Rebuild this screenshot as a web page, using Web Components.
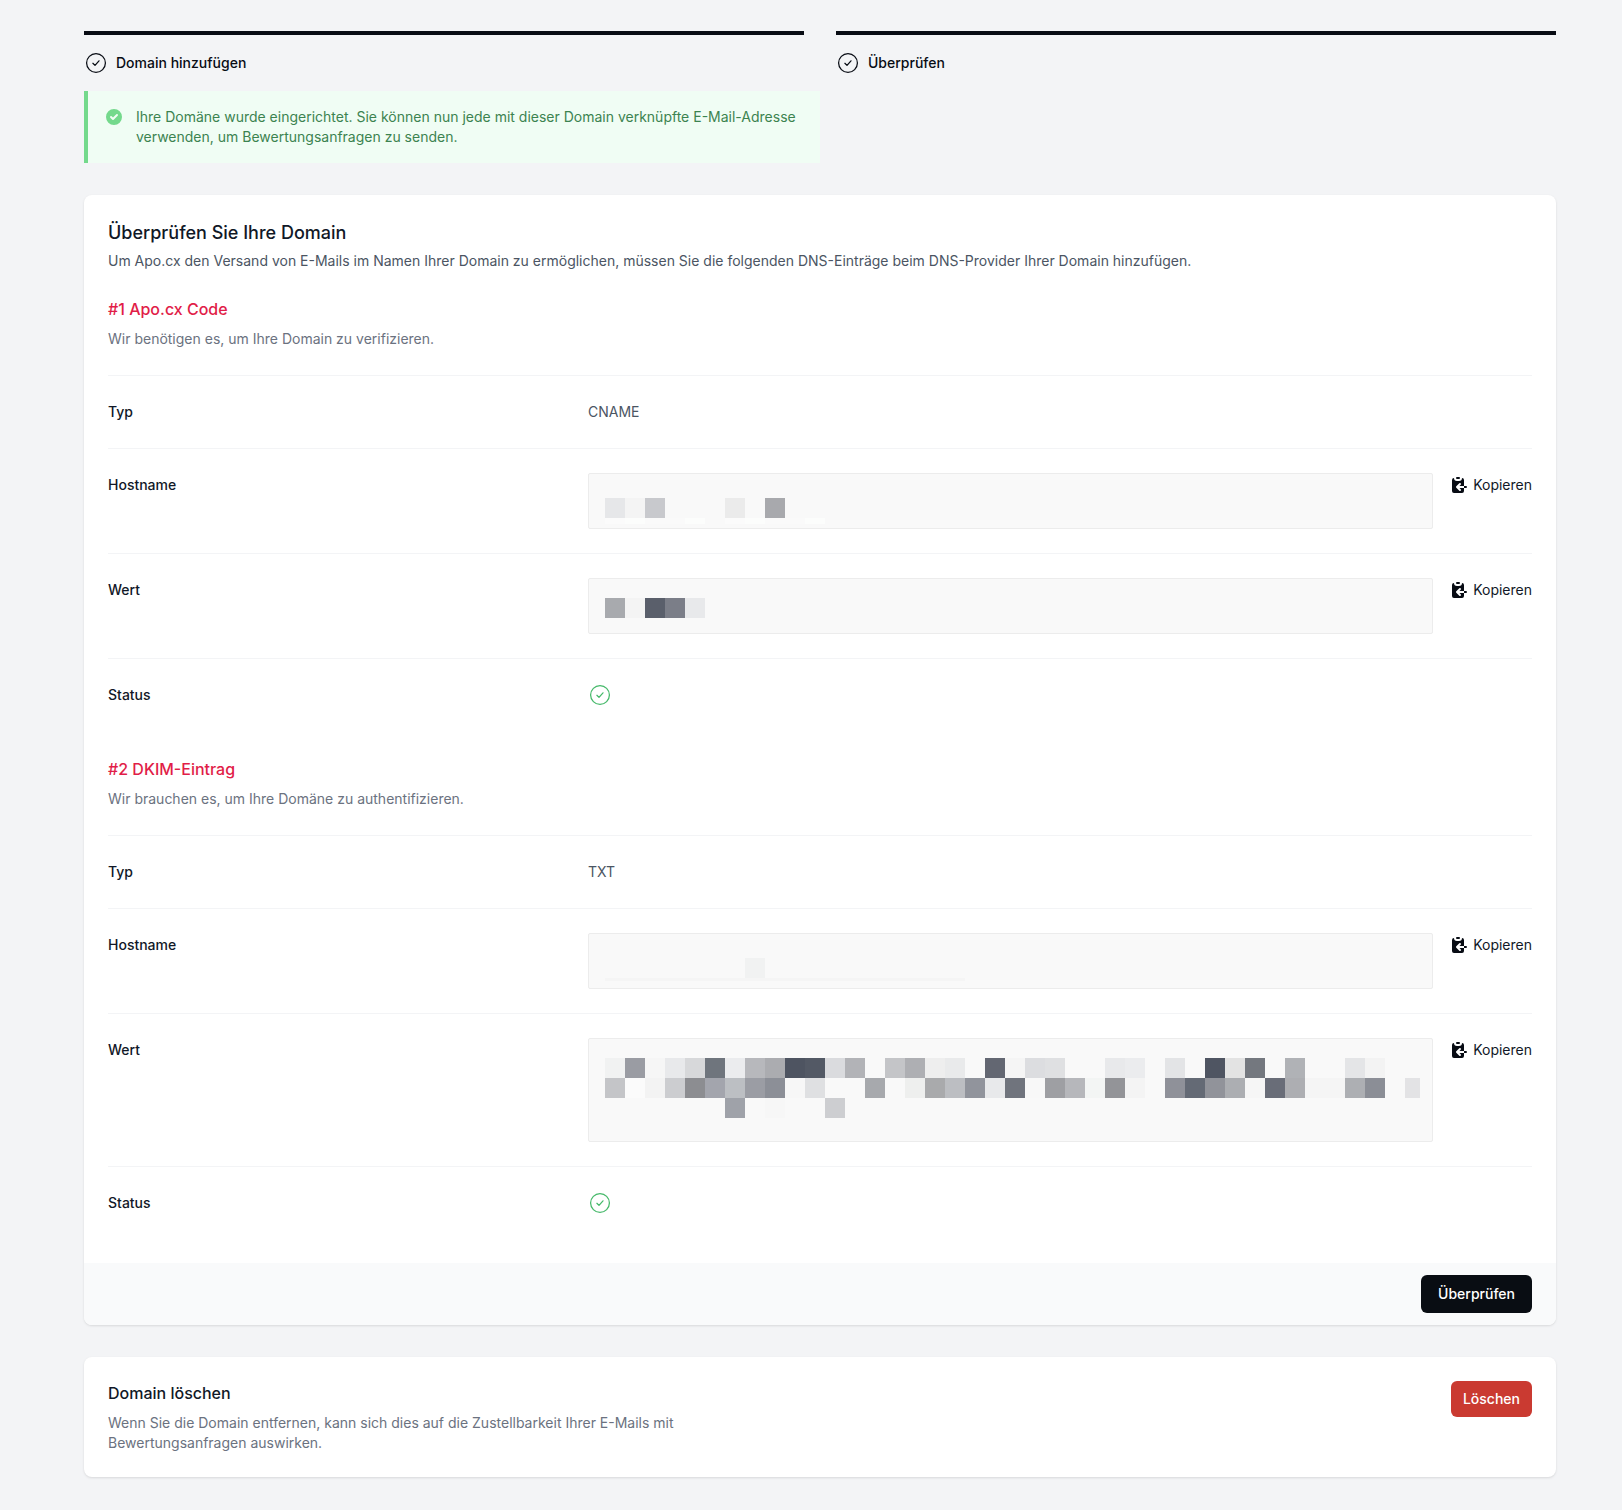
<!DOCTYPE html>
<html lang="de">
<head>
<meta charset="utf-8">
<title>Domain</title>
<style>
html,body{margin:0;background:#f3f4f6;}
body{font-family:Inter,"Liberation Sans",sans-serif;font-size:14px;line-height:20px;color:#111827;}
</style>
</head>
<body>
<domain-page>
  <step-row>
    <step-item>Domain hinzufügen</step-item>
    <step-item>Überprüfen</step-item>
  </step-row>
  <success-alert>Ihre Domäne wurde eingerichtet. Sie können nun jede mit dieser Domain verknüpfte E-Mail-Adresse verwenden, um Bewertungsanfragen zu senden.</success-alert>
  <verify-card>
    <span slot="title">Überprüfen Sie Ihre Domain</span>
    <span slot="desc">Um Apo.cx den Versand von E-Mails im Namen Ihrer Domain zu ermöglichen, müssen Sie die folgenden DNS-Einträge beim DNS-Provider Ihrer Domain hinzufügen.</span>

    <dns-heading>
      <span slot="title">#1 Apo.cx Code</span>
      Wir benötigen es, um Ihre Domain zu verifizieren.
    </dns-heading>
    <dns-row label="Typ">CNAME</dns-row>
    <dns-row label="Hostname"><value-box top="24" bottom="4" rows="e6e7e9,f4f4f4,c8c9cd,f9f9f9,f9f9f9,f9f9f9,ebebeb,f9f9f9,a8a9ad|fbfbfb,fcfdfc,fafafa,fafafa,fcfdfc,f9f9f9,fbfbfb,fcfdfc,fafafa,fafafa,fcfdfc:6"></value-box></dns-row>
    <dns-row label="Wert"><value-box top="19" bottom="15" rows="a8aaae,f4f4f4,5a5f6b,7b7e88,e8e9eb"></value-box></dns-row>
    <dns-row label="Status"><status-check></status-check></dns-row>

    <dns-heading>
      <span slot="title">#2 DKIM-Eintrag</span>
      Wir brauchen es, um Ihre Domäne zu authentifizieren.
    </dns-heading>
    <dns-row label="Typ">TXT</dns-row>
    <dns-row label="Hostname"><value-box top="24" bottom="7" rows="f9f9f9,f9f9f9,f9f9f9,f9f9f9,f9f9f9,f9f9f9,f9f9f9,f1f2f2|f5f5f5*18:3"></value-box></dns-row>
    <dns-row label="Wert"><value-box top="19" bottom="23" rows="f1f2f2,9a9ca3,f6f6f6,e8e9eb,d7d8da,6f757d,ebecee,b7b8bc,abacb0,4e5461,535965,dadbde,b2b3b7,f9f9f9,c4c5c8,aeafb3,eeeeee,e9eaeb,f9f9f9,636772,f5f5f5,dcdde0,dfe0e2,f9f9f9,f9f9f9,e8e9eb,ebecee,f9f9f9,e3e4e6,f9f9f9,4f5562,e3e3e3,74787f,f9f9f9,b0b2b6,f9f9f9,f9f9f9,e4e5e7,f3f3f3|c4c5c8,fbfbfb,f3f3f3,cccdd0,8c8d91,a3a5ad,bcbfc3,9b9da4,8c8f97,f7f7f7,dfe0e2,f9f9f9,f9f9f9,a7a9ad,f9f9f9,eeefee,a9aaac,bcbec2,91949c,e8e9eb,70747d,f8f8f8,9e9fa3,b6b7bb,f3f5f4,939498,f4f4f4,f9f9f9,8f9199,646a75,91939a,acaeb2,f6f6f6,696d78,adaeb2,f5f5f5,f5f5f5,adafb3,8b8e96,f9f9f9,e3e3e5/15|f9f9f9,f9f9f9,f9f9f9,f9f9f9,f9f9f9,f9f9f9,9fa2a9,f9f9f9,f7f7f7,f9f9f9,f9f9f9,cdced1"></value-box></dns-row>
    <dns-row label="Status"><status-check></status-check></dns-row>

    <action-button slot="footer">Überprüfen</action-button>
  </verify-card>
  <delete-card>
    <span slot="title">Domain löschen</span>
    Wenn Sie die Domain entfernen, kann sich dies auf die Zustellbarkeit Ihrer E-Mails mit Bewertungsanfragen auswirken.
    <action-button slot="action" variant="danger">Löschen</action-button>
  </delete-card>
</domain-page>

<script>
function define(name, css, html, extra){
  customElements.define(name, class extends HTMLElement{
    constructor(){
      super();
      this.attachShadow({mode:'open'}).innerHTML = '<style>'+css+'</style>'+html;
    }
    connectedCallback(){ if(extra) extra(this); }
  });
}

define('domain-page',
  ':host{display:block;padding:31px 66px 33px 84px;}',
  '<slot></slot>');

define('step-row',
  ':host{display:grid;grid-template-columns:1fr 1fr;column-gap:32px;}',
  '<slot></slot>');

define('step-item',
  ':host{display:flex;align-items:center;gap:8px;border-top:4px solid #080c14;padding-top:16px;font-weight:500;font-size:14px;line-height:24px;color:#080c14;}svg{width:24px;height:24px;display:block;flex:none;}',
  '<svg viewBox="0 0 24 24" fill="none" stroke="#080c14" stroke-width="1.25" stroke-linecap="round" stroke-linejoin="round"><circle cx="12" cy="12" r="9.4"/><path d="M8.9 12.3l2.1 2.1 4-4.6"/></svg><span><slot></slot></span>');

define('success-alert',
  ':host{display:flex;box-sizing:border-box;width:736px;margin:16px 0 32px;padding:16px;gap:12px;background:#f0fdf4;border-left:4px solid #74d98c;color:#3c8350;font-size:14px;line-height:20px;}svg{width:20px;height:20px;flex:none;display:block;fill:#74d98c;}',
  '<svg viewBox="0 0 20 20"><path fill-rule="evenodd" clip-rule="evenodd" d="M10 18a8 8 0 100-16 8 8 0 000 16zm3.707-9.293a1 1 0 00-1.414-1.414L9 10.586 7.707 9.293a1 1 0 00-1.414 1.414l2 2a1 1 0 001.414 0l4-4z"/></svg><span><slot></slot></span>');

define('verify-card',
  ':host{display:block;background:#fff;border-radius:8px;box-shadow:0 1px 3px rgba(0,0,0,.08),0 1px 2px rgba(0,0,0,.04);overflow:hidden;margin-bottom:32px;}'+
  '.body{padding:24px 24px 24px;}h2{margin:0;font-size:18px;line-height:28px;font-weight:500;color:#111827;}'+
  'p{margin:4px 0 0;color:#4b5563;font-size:14px;line-height:20px;}'+
  'footer{display:flex;justify-content:flex-end;background:#f9fafb;padding:12px 24px;}',
  '<div class="body"><h2><slot name="title"></slot></h2><p><slot name="desc"></slot></p><slot></slot></div><footer><slot name="footer"></slot></footer>');

define('dns-heading',
  ':host{display:block;padding:26px 0 26px;color:#6b7280;font-size:14px;line-height:20px;}'+
  'h3{margin:0 0 8px;font-size:16px;line-height:24px;font-weight:500;color:#e11d48;}',
  '<h3><slot name="title"></slot></h3><slot></slot>');

define('dns-row',
  ':host{display:grid;grid-template-columns:repeat(3,1fr);column-gap:16px;border-top:1px solid #f3f4f6;padding:24px 0;font-size:14px;line-height:24px;color:#4b5563;}'+
  '.l{font-weight:500;color:#111827;}.v{grid-column:span 2;min-width:0;}',
  '<div class="l"></div><div class="v"><slot></slot></div>',
  el=>{ el.shadowRoot.querySelector('.l').textContent = el.getAttribute('label'); });

define('value-box',
  ':host{display:flex;gap:16px;align-items:flex-start;}'+
  '.box{flex:1;min-width:0;box-sizing:border-box;border:1px solid #ececec;border-radius:2px;background:#f9f9f9;padding-left:16px;padding-right:10px;}'+
  '.r{display:flex;}.c{flex:none;width:20px;height:20px;}'+
  'button{all:unset;display:flex;align-items:center;gap:4px;color:#111827;font:inherit;font-size:14px;line-height:24px;white-space:nowrap;}'+
  'svg{width:20px;height:20px;display:block;fill:#080c14;}',
  '<div class="box"></div><button type="button"><svg viewBox="0 0 20 20"><path d="M8 2a1 1 0 000 2h2a1 1 0 100-2H8z"/><path d="M3 5a2 2 0 012-2 3 3 0 003 3h2a3 3 0 003-3 2 2 0 012 2v6h-4.586l1.293-1.293a1 1 0 00-1.414-1.414l-3 3a1 1 0 000 1.414l3 3a1 1 0 001.414-1.414L10.414 13H15v3a2 2 0 01-2 2H5a2 2 0 01-2-2V5zM15 11h2a1 1 0 110 2h-2v-2z"/></svg>Kopieren</button>',
  el=>{
    const box = el.shadowRoot.querySelector('.box');
    box.style.paddingTop = el.getAttribute('top')+'px';
    box.style.paddingBottom = el.getAttribute('bottom')+'px';
    box.replaceChildren();
    el.getAttribute('rows').split('|').forEach(row=>{
      const [cells,h] = row.split(':');
      const r = document.createElement('div'); r.className='r';
      cells.split(',').forEach(c=>{
        const [col,w] = c.split('/');
        const [hex,n] = col.split('*');
        const d = document.createElement('div'); d.className='c';
        d.style.background = '#'+hex;
        if(w) d.style.width = w+'px';
        if(h) d.style.height = h+'px';
        if(n) d.style.width = (n*20)+'px';
        r.append(d);
      });
      box.append(r);
    });
  });

define('status-check',
  ':host{display:block;height:24px;}svg{width:24px;height:24px;display:block;}',
  '<svg viewBox="0 0 24 24" fill="none" stroke="#46b96a" stroke-width="1.25" stroke-linecap="round" stroke-linejoin="round"><circle cx="12" cy="12" r="9.4"/><path d="M8.9 12.3l2.1 2.1 4-4.6"/></svg>');

define('action-button',
  ':host{display:inline-flex;align-items:center;justify-content:center;height:38px;padding:0 17px;border-radius:6px;background:#090d13;color:#fff;font-size:14px;line-height:20px;font-weight:500;}'+
  ':host([variant=danger]){height:36px;padding:0 12px;background:#ca3a31;}',
  '<slot></slot>');

define('delete-card',
  ':host{display:flex;justify-content:space-between;align-items:flex-start;background:#fff;border-radius:8px;box-shadow:0 1px 3px rgba(0,0,0,.08),0 1px 2px rgba(0,0,0,.04);padding:24px;}'+
  'h3{margin:0 0 8px;font-size:16px;line-height:24px;font-weight:500;color:#111827;}'+
  '.t{max-width:576px;color:#6b7280;font-size:14px;line-height:20px;}',
  '<div class="t"><h3><slot name="title"></slot></h3><slot></slot></div><slot name="action"></slot>');
</script>
</body>
</html>
